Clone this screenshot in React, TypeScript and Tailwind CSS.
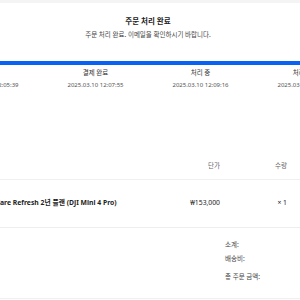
export default function App() {
	const steps = [
		{ label: "접수됨", time: "2025.03.10 12:05:39" },
		{ label: "결제 완료", time: "2025.03.10 12:07:55" },
		{ label: "처리 중", time: "2025.03.10 12:09:16" },
		{ label: "처리 완료", time: "2025.03.10 12:10:02" },
	];

	return (
		<div
			className="h-[300px] w-[300px] overflow-hidden bg-white"
			style={{ fontFamily: '"Noto Sans", "Noto Sans CJK KR", sans-serif' }}
		>
			<div className="h-[3px] bg-[#f4f4f4]" />
			<div className="ml-[-62px] w-[420px]">
				<h1 className="mt-[11px] h-[14px] text-center text-[7.5px] font-bold leading-[14px] text-[#222]">
					주문 처리 완료
				</h1>
				<p className="mt-[1px] h-[12px] text-center text-[6.5px] leading-[12px] text-[#444]">
					주문 처리 완료. 이메일을 확인하시기 바랍니다.
				</p>

				<div className="mt-[20px] h-[4px] bg-[#0a62f2]" />
				<div className="mt-[2px] grid grid-cols-4">
					{steps.map((s) => (
						<div key={s.label} className="text-center">
							<div className="h-[12px] text-[6.5px] leading-[12px] text-[#333]">{s.label}</div>
							<div className="h-[12px] text-[6px] leading-[12px] text-[#555]">{s.time}</div>
						</div>
					))}
				</div>

				<div className="mt-[69px] flex h-[20px] items-start border-b border-[#f0f0f0] pl-[46px] text-[6.5px] leading-[12px] text-[#666]">
					<div className="w-[180px]" />
					<div className="w-[56px] text-right">단가</div>
					<div className="w-[67px] text-right">수량</div>
				</div>

				<div className="flex h-[48px] items-center border-b border-[#eeeeee] pl-[46px] text-[6.8px] text-[#222]">
					<div className="w-[180px] whitespace-nowrap font-bold">
						DJI Care Refresh 2년 플랜 (DJI Mini 4 Pro)
					</div>
					<div className="w-[56px] text-right">₩153,000</div>
					<div className="w-[67px] text-right">× 1</div>
				</div>

				<div className="flex h-[71px] flex-col border-b border-[#f0f0f0] pl-[287px] pt-[11px] text-[6.5px] leading-[12px] text-[#444]">
					<div>소계:</div>
					<div className="mt-[2px]">배송비:</div>
					<div className="mt-[6px]">총 주문 금액:</div>
				</div>
			</div>
		</div>
	);
}
